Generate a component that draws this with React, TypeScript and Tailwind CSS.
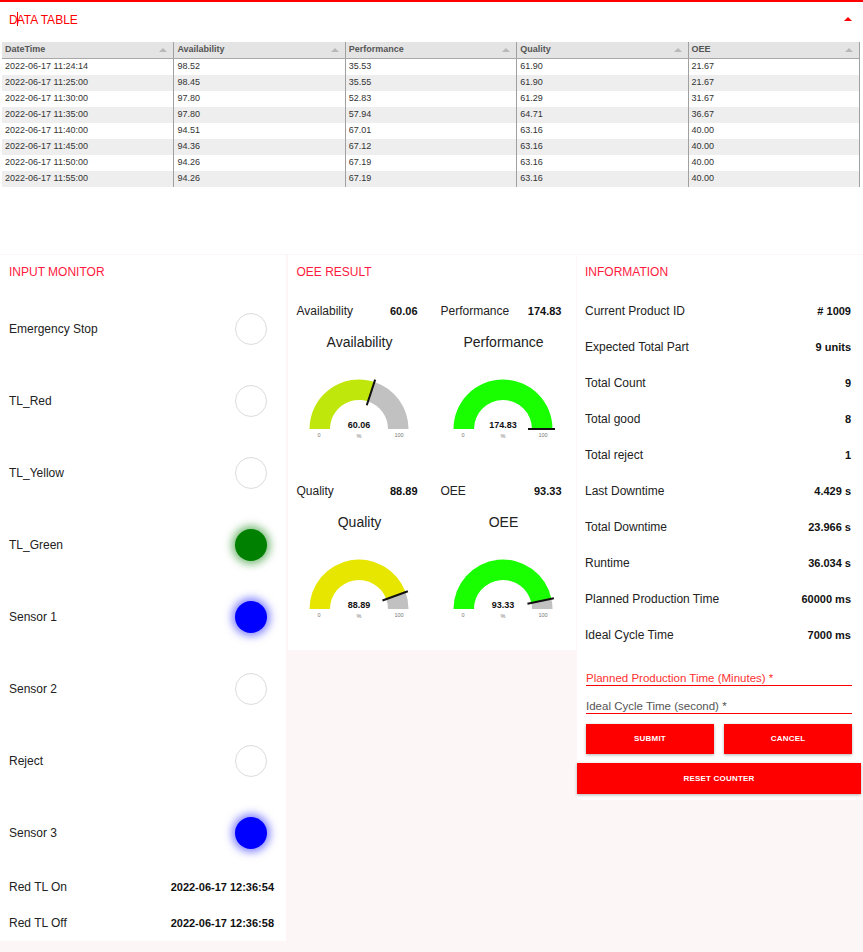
import React from "react";

const FONT = { fontFamily: '"Liberation Sans", Arial, sans-serif' };

const ROWS = [
  ["2022-06-17 11:24:14", "98.52", "35.53", "61.90", "21.67"],
  ["2022-06-17 11:25:00", "98.45", "35.55", "61.90", "21.67"],
  ["2022-06-17 11:30:00", "97.80", "52.83", "61.29", "31.67"],
  ["2022-06-17 11:35:00", "97.80", "57.94", "64.71", "36.67"],
  ["2022-06-17 11:40:00", "94.51", "67.01", "63.16", "40.00"],
  ["2022-06-17 11:45:00", "94.36", "67.12", "63.16", "40.00"],
  ["2022-06-17 11:50:00", "94.26", "67.19", "63.16", "40.00"],
  ["2022-06-17 11:55:00", "94.26", "67.19", "63.16", "40.00"],
];

const COLS = ["DateTime", "Availability", "Performance", "Quality", "OEE"];

type Input = { label: string; state: "off" | "green" | "blue" };

const INPUTS: Input[] = [
  { label: "Emergency Stop", state: "off" },
  { label: "TL_Red", state: "off" },
  { label: "TL_Yellow", state: "off" },
  { label: "TL_Green", state: "green" },
  { label: "Sensor 1", state: "blue" },
  { label: "Sensor 2", state: "off" },
  { label: "Reject", state: "off" },
  { label: "Sensor 3", state: "blue" },
];

const INFO = [
  ["Current Product ID", "# 1009"],
  ["Expected Total Part", "9 units"],
  ["Total Count", "9"],
  ["Total good", "8"],
  ["Total reject", "1"],
  ["Last Downtime", "4.429 s"],
  ["Total Downtime", "23.966 s"],
  ["Runtime", "36.034 s"],
  ["Planned Production Time", "60000 ms"],
  ["Ideal Cycle Time", "7000 ms"],
];

function Lamp({ state }: { state: Input["state"] }) {
  if (state === "green")
    return <div className="h-8 w-8 rounded-full bg-[#008000] shadow-[0_0_8px_3px_rgba(0,128,0,0.55)]" />;
  if (state === "blue")
    return <div className="h-8 w-8 rounded-full bg-[#0000ff] shadow-[0_0_8px_3px_rgba(0,0,255,0.5)]" />;
  return <div className="h-8 w-8 rounded-full border-[1.5px] border-[#dcdcdc] bg-white" />;
}

function pt(cx: number, cy: number, r: number, deg: number) {
  const a = (deg * Math.PI) / 180;
  return [cx + r * Math.cos(a), cy - r * Math.sin(a)];
}

function sector(cx: number, cy: number, ro: number, ri: number, a1: number, a2: number) {
  // a1 > a2, sweep clockwise on screen
  const [x1, y1] = pt(cx, cy, ro, a1);
  const [x2, y2] = pt(cx, cy, ro, a2);
  const [x3, y3] = pt(cx, cy, ri, a2);
  const [x4, y4] = pt(cx, cy, ri, a1);
  return `M${x1} ${y1} A${ro} ${ro} 0 0 1 ${x2} ${y2} L${x3} ${y3} A${ri} ${ri} 0 0 0 ${x4} ${y4} Z`;
}

function Gauge({ title, value, color }: { title: string; value: number; color: string }) {
  const cx = 71;
  const cy = 77;
  const pct = Math.min(value, 100) / 100;
  const ang = 180 - pct * 180;
  const [n1x, n1y] = pt(cx, cy, 25, ang);
  const [n2x, n2y] = pt(cx, cy, 52, ang);
  return (
    <div className="flex flex-col items-center">
      <div className="mt-[3px] h-5 text-[14px] leading-5 text-[#222]">{title}</div>
      <svg width="144" height="90" viewBox="0 0 144 90">
        <path d={sector(cx, cy, 49.5, 29, 180, ang)} fill={color} />
        {ang > 0.01 && <path d={sector(cx, cy, 49.5, 29, ang, 0)} fill="#c1c1c1" />}
        <line x1={n1x} y1={n1y} x2={n2x} y2={n2y} stroke="#111" strokeWidth="2" />
        <text x={cx} y={cy - 1} textAnchor="middle" fontSize="9" fontWeight="bold" fill="#111" style={FONT}>
          {value.toFixed(2)}
        </text>
        <text x={cx - 40} y={cy + 8} textAnchor="middle" fontSize="5.5" fill="#777" style={FONT}>0</text>
        <text x={cx} y={cy + 9} textAnchor="middle" fontSize="5.5" fill="#777" style={FONT}>%</text>
        <text x={cx + 40} y={cy + 8} textAnchor="middle" fontSize="5.5" fill="#777" style={FONT}>100</text>
      </svg>
    </div>
  );
}

function Stat({ label, value }: { label: string; value: string }) {
  return (
    <div className="flex h-9 items-center justify-between pl-[9px] pr-[14px] text-[12px] text-[#222]">
      <span>{label}</span>
      <span className="text-[11px] font-bold text-[#111]">{value}</span>
    </div>
  );
}

function SortArrow() {
  return (
    <span className="h-0 w-0 border-x-[4px] border-b-[4px] border-x-transparent border-b-[#b8b8b8]" />
  );
}

function PanelTitle({ text, pad }: { text: string; pad: string }) {
  return (
    <div className={`flex h-[38px] items-center pb-[4px] text-[12px] text-[#ff1a40] ${pad}`}>{text}</div>
  );
}

export default function App() {
  return (
    <div className="min-h-[952px] w-[863px] bg-white" style={FONT}>
      <div className="border-t-2 border-[#ff0000]">
        <div className="flex h-[34px] items-center justify-between pl-[9px] pr-[11px]">
          <span className="text-[12px] text-[#ff0000]">
            D<span className="mx-[-1px] inline-block h-[14px] w-px translate-y-[2px] bg-[#ff0000]" />ATA TABLE
          </span>
          <span className="h-0 w-0 border-x-[4px] border-b-[4px] border-x-transparent border-b-[#ff0000]" />
        </div>
        <div className="mx-[2px] mt-[6px] mr-[3px] border-r border-[#a0a0a0]">
          <div className="grid grid-cols-5 border-b border-[#a8a8a8] bg-[#e4e4e4]">
            {COLS.map((c, i) => (
              <div
                key={c}
                className={`flex h-4 items-center justify-between pl-[3px] pr-[6px] text-[9px] font-bold text-[#555] ${i > 0 ? "border-l border-[#a0a0a0]" : ""}`}
              >
                <span>{c}</span>
                <SortArrow />
              </div>
            ))}
          </div>
          {ROWS.map((r, ri) => (
            <div key={ri} className={`grid grid-cols-5 ${ri % 2 ? "bg-[#eeeeee]" : "bg-white"}`}>
              {r.map((v, i) => (
                <div
                  key={i}
                  className={`flex h-4 items-center pl-[3px] text-[9px] text-[#333] ${i > 0 ? "border-l border-[#a0a0a0]" : ""}`}
                >
                  {v}
                </div>
              ))}
            </div>
          ))}
        </div>
      </div>

      <div className="mt-[67px] grid grid-cols-[286px_288px_286px] gap-x-[1.5px] bg-[#fcf7f6] pt-px pb-[14px]">
        {/* Input monitor */}
        <div className="self-start bg-white">
          <PanelTitle text="INPUT MONITOR" pad="pl-[9px]" />
          {INPUTS.map((it) => (
            <div key={it.label} className="flex h-[72px] items-center justify-between pl-[9px] pr-[19px] text-[12px] text-[#222]">
              <span>{it.label}</span>
              <Lamp state={it.state} />
            </div>
          ))}
          <div className="flex h-9 items-center justify-between pl-[9px] pr-[12px] text-[12px] text-[#222]">
            <span>Red TL On</span>
            <span className="text-[11px] font-bold text-[#111]">2022-06-17 12:36:54</span>
          </div>
          <div className="flex h-9 items-center justify-between pl-[9px] pr-[12px] text-[12px] text-[#222]">
            <span>Red TL Off</span>
            <span className="text-[11px] font-bold text-[#111]">2022-06-17 12:36:58</span>
          </div>
        </div>

        {/* OEE result */}
        <div className="self-start bg-white pb-[28px]">
          <PanelTitle text="OEE RESULT" pad="pl-[9px]" />
          <div className="grid grid-cols-2">
            <div>
              <Stat label="Availability" value="60.06" />
              <Gauge title="Availability" value={60.06} color="#c0e70c" />
            </div>
            <div>
              <Stat label="Performance" value="174.83" />
              <Gauge title="Performance" value={174.83} color="#1aff00" />
            </div>
          </div>
          <div className="mt-[31px] grid grid-cols-2">
            <div>
              <Stat label="Quality" value="88.89" />
              <Gauge title="Quality" value={88.89} color="#e6e600" />
            </div>
            <div>
              <Stat label="OEE" value="93.33" />
              <Gauge title="OEE" value={93.33} color="#1aff00" />
            </div>
          </div>
        </div>

        {/* Information */}
        <div className="self-start bg-white pb-[6px]">
          <PanelTitle text="INFORMATION" pad="pl-[8px]" />
          {INFO.map(([l, v]) => (
            <div key={l} className="flex h-9 items-center justify-between pl-[8px] pr-[12px] text-[12px] text-[#222]">
              <span>{l}</span>
              <span className="text-[11px] font-bold text-[#111]">{v}</span>
            </div>
          ))}
          <div className="px-[9px] pr-[11px] pt-[19px]">
            <div className="border-b border-[#ff0000] text-[11.5px] leading-[13px] text-[#ff3030]">
              Planned Production Time (Minutes) *
            </div>
            <div className="mt-[14px] border-b border-[#ff0000] text-[11.5px] leading-[13px] text-[#555]">
              Ideal Cycle Time (second) *
            </div>
            <div className="mt-[10px] grid grid-cols-2 gap-[10px]">
              <button className="h-[30px] bg-[#ff0000] text-[8px] font-bold tracking-wide text-white shadow-[0_1px_3px_rgba(0,0,0,0.3)]">
                SUBMIT
              </button>
              <button className="h-[30px] bg-[#ff0000] text-[8px] font-bold tracking-wide text-white shadow-[0_1px_3px_rgba(0,0,0,0.3)]">
                CANCEL
              </button>
            </div>
          </div>
          <button className="mt-[9px] h-[31px] w-[284px] bg-[#ff0000] text-[8px] font-bold tracking-wide text-white shadow-[0_1px_3px_rgba(0,0,0,0.3)]">
            RESET COUNTER
          </button>
        </div>
      </div>
    </div>
  );
}
